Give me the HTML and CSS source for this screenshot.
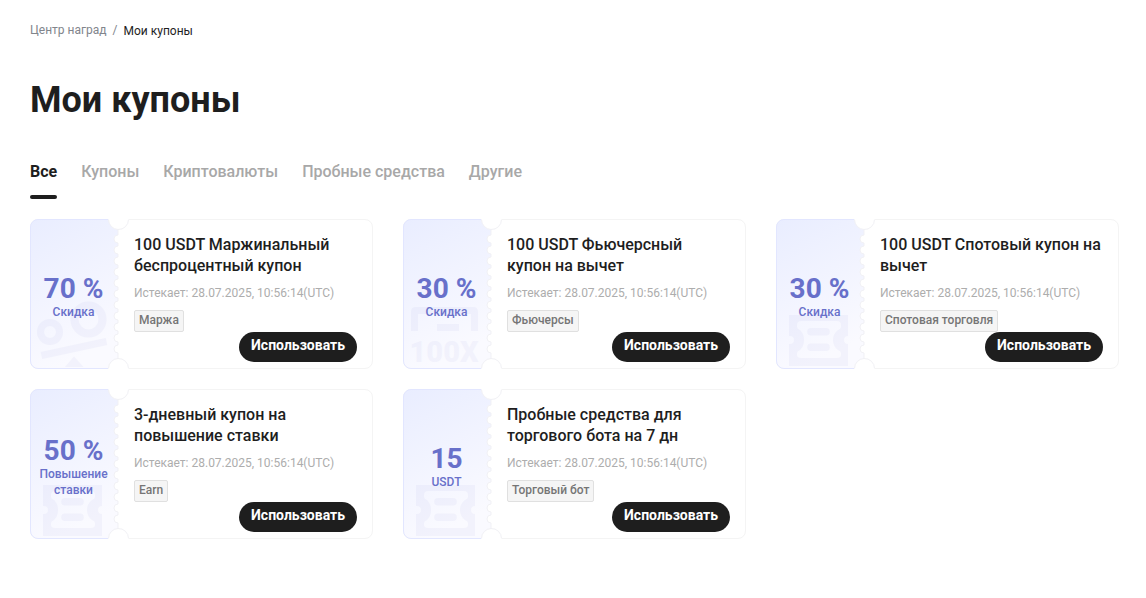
FILE: index.html
```html
<!DOCTYPE html>
<html lang="ru">
<head>
    <meta charset="UTF-8">
    <meta name="viewport" content="width=device-width, initial-scale=1">
    <title>Мои купоны</title>
    <link rel="stylesheet" href="styles.css">
</head>
<body>
<svg class="sprite" aria-hidden="true">
    <defs>
        <linearGradient id="stub-fill" x1="0" y1="0" x2="0.3" y2="1">
            <stop offset="0" stop-color="#e9edff"/>
            <stop offset="1" stop-color="#fafaff"/>
        </linearGradient>
    </defs>
    <symbol id="stub" viewBox="0 0 100 150">
        <path d="M77 0H99V1A10 10 0 0 1 88 10.500A10 10 0 0 1 77 0ZM77 150H99V149A10 10 0 0 0 88 139.500A10 10 0 0 0 77 150Z" fill="#fff"/>
        <path d="M8 .5H78.500A10 10 0 0 0 88 10.500V16a4 4 0 0 0 0 8v3a4 4 0 0 0 0 8v3a4 4 0 0 0 0 8v3a4 4 0 0 0 0 8v3a4 4 0 0 0 0 8v3a4 4 0 0 0 0 8v3a4 4 0 0 0 0 8v3a4 4 0 0 0 0 8v3a4 4 0 0 0 0 8v3a4 4 0 0 0 0 8v3a4 4 0 0 0 0 8V139.500A10 10 0 0 0 78.500 149.500H8A7.500 7.500 0 0 1 .5 142V8A7.500 7.500 0 0 1 8 .5Z" fill="url(#stub-fill)"/>
        <path d="M78 .5H8A7.500 7.500 0 0 0 .5 8V142A7.500 7.500 0 0 0 8 149.500H78" fill="none" stroke="#e2e6ff"/>
        <path d="M78.500 .5A10 10 0 0 0 88 10.500V16a4 4 0 0 0 0 8v3a4 4 0 0 0 0 8v3a4 4 0 0 0 0 8v3a4 4 0 0 0 0 8v3a4 4 0 0 0 0 8v3a4 4 0 0 0 0 8v3a4 4 0 0 0 0 8v3a4 4 0 0 0 0 8v3a4 4 0 0 0 0 8v3a4 4 0 0 0 0 8v3a4 4 0 0 0 0 8V139.500A10 10 0 0 0 78.500 149.500M88 10.500A10 10 0 0 0 98.500 .5M88 139.500A10 10 0 0 1 98.500 149.500" fill="none" stroke="#f1f1f5"/>
    </symbol>
    <symbol id="mark-percent" viewBox="0 0 88 150">
        <circle cx="20" cy="113" r="9.500" fill="none" stroke="currentColor" stroke-width="7"/>
        <circle cx="58.500" cy="100.500" r="14" fill="none" stroke="currentColor" stroke-width="8"/>
        <path d="M10.700 133L75.700 119L77.200 126L12.200 140ZM44 137.500L53.500 148H35Z" fill="currentColor"/>
    </symbol>
    <symbol id="mark-ticket" viewBox="0 0 88 150">
        <path fill-rule="evenodd" fill="currentColor" d="M13 96H72V117A4 4 0 0 0 72 125V147H13V125H14A4 4 0 0 0 14 117H13ZM25 102Q21 102 21 106V108Q21 110 24 111Q28 115 28 121Q28 127 24 131Q21 132 21 134V136Q21 139 25 139H61Q65 139 65 136V134Q65 132 62 131Q57 127 57 121Q57 115 62 111Q65 110 65 108V106Q65 102 61 102ZM35 109H50A3.700 3.700 0 0 1 50 116.500H35A3.700 3.700 0 0 1 35 109ZM35 124.500H50A3.700 3.700 0 0 1 50 132H35A3.700 3.700 0 0 1 35 124.500Z"/>
    </symbol>
</svg>

<main class="page">
    <nav class="breadcrumb" aria-label="Навигация">
        <a href="#">Центр наград</a>
        <span class="breadcrumb-sep">/</span>
        <span class="breadcrumb-current">Мои купоны</span>
    </nav>

    <h1 class="page-title">Мои купоны</h1>

    <nav class="tabs">
        <a class="tab active" href="#">Все</a>
        <a class="tab" href="#">Купоны</a>
        <a class="tab" href="#">Криптовалюты</a>
        <a class="tab" href="#">Пробные средства</a>
        <a class="tab" href="#">Другие</a>
    </nav>

    <section class="coupons">
        <article class="coupon">
            <div class="stub">
                <svg class="stub-bg"><use href="#stub"/></svg>
                <svg class="stub-mark"><use href="#mark-percent"/></svg>
                <strong class="stub-value">70 %</strong>
                <span class="stub-label">Скидка</span>
            </div>
            <div class="info">
                <h2 class="info-title">100 USDT Маржинальный беспроцентный купон</h2>
                <p class="info-date">Истекает: 28.07.2025, 10:56:14(UTC)</p>
                <span class="tag">Маржа</span>
                <button class="use-btn" type="button">Использовать</button>
            </div>
        </article>

        <article class="coupon">
            <div class="stub">
                <svg class="stub-bg"><use href="#stub"/></svg>
                <svg class="stub-mark" viewBox="0 0 88 150">
                    <path d="M8 112V93Q8 88 13 88H70Q75 88 75 93V112H68V95H15V112ZM34 105H56V112H34Z" fill="currentColor"/>
                    <text x="41" y="143" text-anchor="middle" class="mark-text">100X</text>
                </svg>
                <strong class="stub-value">30 %</strong>
                <span class="stub-label">Скидка</span>
            </div>
            <div class="info">
                <h2 class="info-title">100 USDT Фьючерсный купон на вычет</h2>
                <p class="info-date">Истекает: 28.07.2025, 10:56:14(UTC)</p>
                <span class="tag">Фьючерсы</span>
                <button class="use-btn" type="button">Использовать</button>
            </div>
        </article>

        <article class="coupon">
            <div class="stub">
                <svg class="stub-bg"><use href="#stub"/></svg>
                <svg class="stub-mark"><use href="#mark-ticket"/></svg>
                <strong class="stub-value">30 %</strong>
                <span class="stub-label">Скидка</span>
            </div>
            <div class="info">
                <h2 class="info-title">100 USDT Спотовый купон на вычет</h2>
                <p class="info-date">Истекает: 28.07.2025, 10:56:14(UTC)</p>
                <span class="tag">Спотовая торговля</span>
                <button class="use-btn" type="button">Использовать</button>
            </div>
        </article>

        <article class="coupon">
            <div class="stub">
                <svg class="stub-bg"><use href="#stub"/></svg>
                <svg class="stub-mark"><use href="#mark-ticket"/></svg>
                <strong class="stub-value">50 %</strong>
                <span class="stub-label">Повышение ставки</span>
            </div>
            <div class="info">
                <h2 class="info-title">3-дневный купон на повышение ставки</h2>
                <p class="info-date">Истекает: 28.07.2025, 10:56:14(UTC)</p>
                <span class="tag">Earn</span>
                <button class="use-btn" type="button">Использовать</button>
            </div>
        </article>

        <article class="coupon">
            <div class="stub">
                <svg class="stub-bg"><use href="#stub"/></svg>
                <svg class="stub-mark"><use href="#mark-ticket"/></svg>
                <strong class="stub-value">15</strong>
                <span class="stub-label">USDT</span>
            </div>
            <div class="info">
                <h2 class="info-title">Пробные средства для торгового бота на 7 дн</h2>
                <p class="info-date">Истекает: 28.07.2025, 10:56:14(UTC)</p>
                <span class="tag">Торговый бот</span>
                <button class="use-btn" type="button">Использовать</button>
            </div>
        </article>
    </section>
</main>
</body>
</html>
```
FILE: styles.css
```css
* {
    box-sizing: border-box;
}

body {
    margin: 0;
    background: #fff;
    color: #1e1e1e;
    font-family: Roboto, "Noto Sans", sans-serif;
}

a {
    color: inherit;
    text-decoration: none;
}

.sprite {
    position: absolute;
    width: 0;
    height: 0;
}

.page {
    padding: 20px 27px 20px 30px;
}

.breadcrumb {
    display: flex;
    gap: 6px;
    font-size: 12px;
    line-height: 20px;
    color: #81858c;
}

.breadcrumb-current {
    padding-top: 1px;
    color: #1e1e1e;
}

.page-title {
    margin: 34px 0 0;
    font-size: 36px;
    line-height: 50px;
    font-weight: 700;
}

.tabs {
    display: flex;
    gap: 24px;
    margin-top: 35px;
}

.tab {
    padding-bottom: 15px;
    font-size: 16px;
    line-height: 24px;
    font-weight: 500;
    color: #a8a8a8;
}

.tab.active {
    position: relative;
    color: #1e1e1e;
    font-weight: 700;
}

.tab.active::after {
    content: "";
    position: absolute;
    left: 0;
    right: 0;
    bottom: 0;
    height: 4px;
    border-radius: 2px;
    background: #1e1e1e;
}

.coupons {
    display: grid;
    grid-template-columns: repeat(3, 1fr);
    gap: 20px 30px;
    margin-top: 20px;
}

.coupon {
    display: flex;
    min-height: 150px;
    border: 1px solid #f4f4f4;
    border-radius: 8px;
}

/* left tear-off part */
.stub {
    position: relative;
    display: flex;
    flex: 0 0 87px;
    flex-direction: column;
    align-items: center;
    justify-content: center;
    padding: 6px 6px 0 4px;
    color: #6870ca;
    text-align: center;
}

.stub-bg,
.stub-mark {
    position: absolute;
    top: -1px;
    left: -1px;
    width: 100px;
    height: 150px;
}

.stub-mark {
    width: 88px;
    opacity: 0.05;
}

.mark-text {
    fill: currentColor;
    font-family: Roboto, sans-serif;
    font-size: 29px;
    font-weight: 900;
}

.stub-value {
    position: relative;
    font-size: 28px;
    line-height: 30px;
    font-weight: 700;
}

.stub-label {
    position: relative;
    font-size: 12px;
    line-height: 16px;
    font-weight: 500;
}

.info {
    display: flex;
    flex: 1;
    flex-direction: column;
    align-items: flex-start;
    min-width: 0;
    padding: 14px 15px 6px 16px;
}

.info-title {
    margin: 0;
    font-size: 16px;
    line-height: 21px;
    font-weight: 500;
}

.info-date {
    margin: 8px 0;
    font-size: 12px;
    line-height: 18px;
    color: #adadad;
}

.tag {
    padding: 0 4px 2px;
    border: 1px solid #e0e0e0;
    border-radius: 2px;
    background: #f5f5f5;
    color: #757575;
    font-size: 12px;
    line-height: 18px;
    font-weight: 500;
}

.use-btn {
    align-self: flex-end;
    padding: 3px 12px 7px;
    border: 0;
    border-radius: 15px;
    background: #1e1e1e;
    color: #fff;
    font-family: inherit;
    font-size: 14px;
    line-height: 20px;
    font-weight: 700;
    cursor: pointer;
}
```
